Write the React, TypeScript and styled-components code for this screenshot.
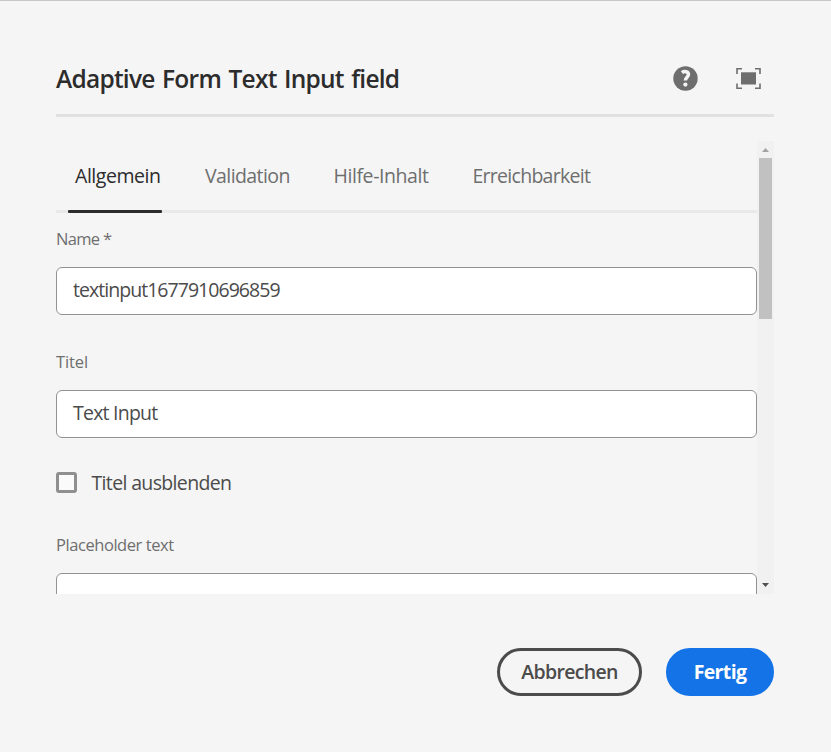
import React from 'react';
import styled, { createGlobalStyle } from 'styled-components';

const GlobalStyle = createGlobalStyle`
  * { box-sizing: border-box; }
  body {
    margin: 0;
    background: #f5f5f5;
    color: #4b4b4b;
    font-family: "Open Sans", "Noto Sans", sans-serif;
    font-size: 19.5px;
    overflow: hidden;
  }
`;

const Text = styled.span<{ $spacing: number }>`
  letter-spacing: ${(p) => p.$spacing}px;
  white-space: nowrap;
`;

const Dialog = styled.main`
  width: 831px;
  height: 752px;
  padding: 40px 57px 0 56px;
  border-top: 1px solid #c8c8c8;
  background: #f5f5f5;
`;

const Header = styled.header`
  display: flex;
  align-items: center;
  justify-content: space-between;
  height: 76px;
  border-bottom: 3px solid #e1e1e1;
`;

const Title = styled.h1`
  margin: 3px 0 0;
  font-size: 24.5px;
  line-height: 34px;
  font-weight: 600;
  word-spacing: 1.8px;
  color: #2c2c2c;
`;

const HeaderActions = styled.div`
  display: flex;
  gap: 38px;
  margin: 1px 13px 0 0;
`;

const IconButton = styled.button`
  display: flex;
  padding: 0;
  border: 0;
  background: none;
  color: #6e6e6e;
`;

const ScrollArea = styled.section`
  display: flex;
  height: 453px;
  margin-top: 24px;
  overflow: hidden;
`;

const Content = styled.div`
  width: 701px;
  flex: none;
`;

const TabList = styled.div`
  display: grid;
  grid-template-columns: 130px 128.5px 139px 1fr;
  height: 72px;
  padding-left: 19px;
  border-bottom: 3px solid #e9e9e9;
`;

const Tab = styled.div<{ $selected?: boolean }>`
  position: relative;
  line-height: 70px;
  color: ${(p) => (p.$selected ? '#2c2c2c' : '#6e6e6e')};
`;

const TabIndicator = styled.span`
  position: absolute;
  left: -7px;
  top: 69px;
  width: 94px;
  height: 3px;
  border-radius: 1px;
  background: #2c2c2c;
`;

const Label = styled.label`
  display: block;
  height: 54px;
  padding-top: 15px;
  font-size: 16.5px;
  line-height: 22px;
  color: #6e6e6e;
`;

const Field = styled.div`
  height: 48px;
  padding: 0 16px;
  border: 1px solid #929292;
  border-radius: 6px;
  background: #fff;
  line-height: 44px;
`;

const FieldGroup = styled.div<{ $gap?: number }>`
  margin-bottom: ${(p) => p.$gap ?? 0}px;
`;

const CheckRow = styled.label`
  display: flex;
  align-items: center;
  gap: 14.5px;
  height: 21px;
  margin-bottom: 26px;
`;

const CheckBox = styled.span`
  width: 21px;
  height: 21px;
  border: 3px solid #8f8f8f;
  border-radius: 3px;
  background: #fafafa;
`;

const ScrollTrack = styled.div`
  display: flex;
  flex-direction: column;
  width: 17px;
  background: #f1f1f1;
`;

const ScrollThumb = styled.div`
  height: 161px;
  margin: 0 2px auto;
  background: #c1c1c1;
`;

const ScrollArrow = styled.svg`
  width: 17px;
  height: 17px;
  flex: none;
`;

const Footer = styled.footer`
  display: flex;
  justify-content: flex-end;
  gap: 24px;
  margin-top: 54px;
`;

const Button = styled.button<{ $primary?: boolean }>`
  width: ${(p) => (p.$primary ? 108 : 145)}px;
  height: 48px;
  padding: 0;
  border: 3px solid ${(p) => (p.$primary ? '#1473e6' : '#4b4b4b')};
  border-radius: 24px;
  background: ${(p) => (p.$primary ? '#1473e6' : 'transparent')};
  color: ${(p) => (p.$primary ? '#fff' : '#4b4b4b')};
  font: ${(p) => (p.$primary ? 700 : 600)} 19.5px/40px "Open Sans", "Noto Sans", sans-serif;
`;

const HelpIcon = () => (
  <svg width="25" height="25" viewBox="0 0 25 25">
    <circle cx="12.5" cy="12.5" r="12.2" fill="currentColor" />
    <path d="M8.9 6.6C11.2 4.9 15.5 5.2 15.5 8.6C15.5 11 12.4 11 12.4 14.6" fill="none" stroke="#f5f5f5" strokeWidth="3.5" />
    <circle cx="12.4" cy="18.6" r="2.1" fill="#f5f5f5" />
  </svg>
);

const FullscreenIcon = () => (
  <svg width="25" height="25" viewBox="0 0 25 25">
    <path d="M1 8V2.7H6M19 2.7H24V8M24 17.5V22.3H19M6 22.3H1V17.5" fill="none" stroke="currentColor" strokeWidth="1.6" />
    <rect x="5" y="6.3" width="15" height="12.2" fill="currentColor" />
  </svg>
);

const tabs = [
  { name: 'Allgemein', spacing: -0.45 },
  { name: 'Validation', spacing: -0.58 },
  { name: 'Hilfe-Inhalt', spacing: -0.42 },
  { name: 'Erreichbarkeit', spacing: -0.72 },
];

export default function App() {
  return (
    <>
      <GlobalStyle />
      <Dialog>
        <Header>
          <Title><Text $spacing={-0.75}>Adaptive Form Text Input field</Text></Title>
          <HeaderActions>
            <IconButton aria-label="Hilfe"><HelpIcon /></IconButton>
            <IconButton aria-label="Vollbild"><FullscreenIcon /></IconButton>
          </HeaderActions>
        </Header>
        <ScrollArea>
          <Content>
            <TabList>
              {tabs.map((tab, i) => (
                <Tab key={tab.name} $selected={i === 0}>
                  <Text $spacing={tab.spacing}>{tab.name}</Text>
                  {i === 0 && <TabIndicator />}
                </Tab>
              ))}
            </TabList>
            <FieldGroup $gap={21}>
              <Label><Text $spacing={-0.7}>Name *</Text></Label>
              <Field><Text $spacing={-0.96}>textinput1677910696859</Text></Field>
            </FieldGroup>
            <FieldGroup $gap={34}>
              <Label><Text $spacing={-0.1}>Titel</Text></Label>
              <Field><Text $spacing={-0.77}>Text Input</Text></Field>
            </FieldGroup>
            <CheckRow>
              <CheckBox />
              <Text $spacing={-0.65}>Titel ausblenden</Text>
            </CheckRow>
            <FieldGroup>
              <Label><Text $spacing={-0.44}>Placeholder text</Text></Label>
              <Field />
            </FieldGroup>
          </Content>
          <ScrollTrack>
            <ScrollArrow viewBox="0 0 17 17"><path d="M5 11L8.5 7L12 11Z" fill="#a3a3a3" /></ScrollArrow>
            <ScrollThumb />
            <ScrollArrow viewBox="0 0 17 17"><path d="M5 6L8.5 10L12 6Z" fill="#505050" /></ScrollArrow>
          </ScrollTrack>
        </ScrollArea>
        <Footer>
          <Button><Text $spacing={-0.66}>Abbrechen</Text></Button>
          <Button $primary><Text $spacing={-0.65}>Fertig</Text></Button>
        </Footer>
      </Dialog>
    </>
  );
}
